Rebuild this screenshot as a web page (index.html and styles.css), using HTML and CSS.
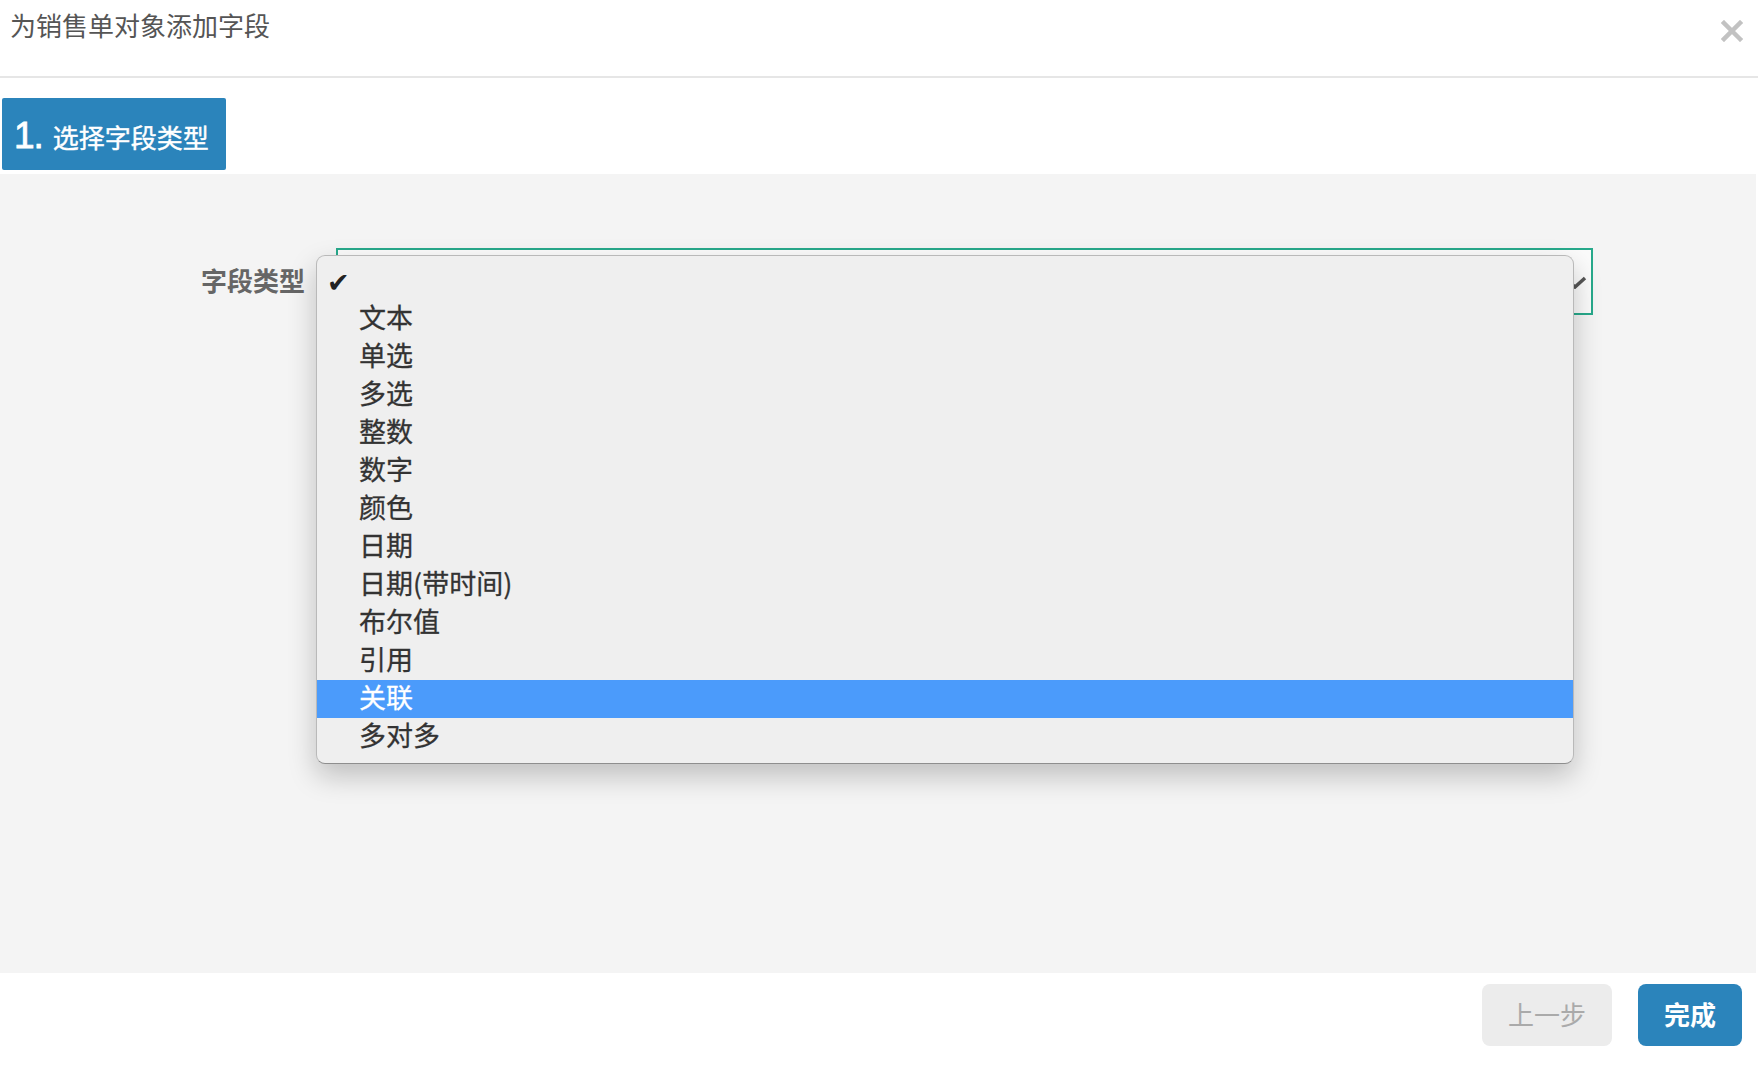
FILE: index.html
```html
<!DOCTYPE html>
<html lang="zh-CN">
<head>
    <meta charset="utf-8">
    <title>为销售单对象添加字段</title>
    <link rel="stylesheet" href="styles.css">
</head>
<body>
    <div class="dialog">

        <div class="dialogHead">
            <div class="title">为销售单对象添加字段</div>
            <span class="close">
                <svg width="22" height="22" viewBox="0 0 22 22">
                    <path d="M3 3 L19 19 M19 3 L3 19" stroke="#c2c2c2" stroke-width="4.5" stroke-linecap="square"/>
                </svg>
            </span>
        </div>

        <div class="steps">
            <div class="step"><span class="num">1.</span>选择字段类型</div>
        </div>

        <div class="panel">
            <div class="formRow">
                <label class="label">字段类型</label>
                <div class="select">
                    <svg class="arrow" width="24" height="14" viewBox="0 0 24 14">
                        <path d="M2 3 L12 12 L22 3" fill="none" stroke="#555" stroke-width="3.5"/>
                    </svg>
                </div>
            </div>

            <!-- native select opened -->
            <div class="menu">
                <div class="option checked">✔</div>
                <div class="option">文本</div>
                <div class="option">单选</div>
                <div class="option">多选</div>
                <div class="option">整数</div>
                <div class="option">数字</div>
                <div class="option">颜色</div>
                <div class="option">日期</div>
                <div class="option">日期(带时间)</div>
                <div class="option">布尔值</div>
                <div class="option">引用</div>
                <div class="option active">关联</div>
                <div class="option">多对多</div>
            </div>
        </div>

        <div class="dialogFoot">
            <button class="btn prev">上一步</button>
            <button class="btn done">完成</button>
        </div>

    </div>
</body>
</html>
```

FILE: styles.css
```css
* {
    margin: 0;
    padding: 0;
    box-sizing: border-box;
}

body {
    font-family: 'Noto Sans CJK SC', 'Noto Sans', sans-serif;
    background: #fff;
    width: 1758px;
    height: 1072px;
    overflow: hidden;
}

.dialogHead {
    height: 78px;
    border-bottom: 2px solid #e6e6e6;
    display: flex;
    justify-content: space-between;
    padding: 11px 15px 0 10px;
}

.title {
    font-size: 26px;
    line-height: 28px;
    color: #555;
}

.close {
    padding-top: 9px;
}

.steps {
    padding: 20px 0 0 2px;
}

.step {
    width: 224px;
    height: 72px;
    background: #2b84bb;
    border-radius: 2px;
    color: #fff;
    font-size: 26px;
    line-height: 72px;
    padding: 2px 0 0 12px;
    display: flex;
    align-items: baseline;
    -webkit-text-stroke: 0.4px #fff;
}

.num {
    font-family: 'Liberation Sans', sans-serif;
    font-size: 37px;
    margin-right: 10px;
    letter-spacing: -1px;
    -webkit-text-stroke: 0.8px #fff;
}

.panel {
    position: relative;
    margin-top: 4px;
    width: 1756px;
    height: 799px;
    background: #f4f4f4;
    padding-top: 74px;
}

.formRow {
    display: flex;
    align-items: center;
}

.label {
    width: 305px;
    text-align: right;
    font-size: 26px;
    font-weight: bold;
    color: #666;
    margin-right: 31px;
    padding-bottom: 5px;
}

.select {
    width: 1257px;
    height: 67px;
    border: 2px solid #27a98b;
    background: #fbfbfb;
    position: relative;
}

.arrow {
    position: absolute;
    right: 4px;
    top: 25px;
}

.menu {
    position: absolute;
    left: 316px;
    top: 81px;
    width: 1258px;
    height: 509px;
    background: #efefef;
    border: 1px solid #b9b9b9;
    border-bottom-color: #8e8e8e;
    border-radius: 9px;
    box-shadow: 0 12px 28px rgba(0, 0, 0, 0.22);
    padding: 6px 0;
}

.option {
    height: 38px;
    line-height: 34px;
    font-size: 27px;
    color: #333;
    padding-left: 42px;
    white-space: nowrap;
    -webkit-text-stroke: 0.3px #333;
}

.option.checked {
    padding-left: 10px;
    font-family: 'DejaVu Sans', sans-serif;
    font-size: 27px;
    color: #222;
    line-height: 42px;
    -webkit-text-stroke: 0;
}

.option.active {
    background: #4b9bfb;
    color: #fff;
    -webkit-text-stroke: 0.3px #fff;
}

.dialogFoot {
    display: flex;
    justify-content: flex-end;
    gap: 26px;
    padding: 11px 16px 0 0;
}

.btn {
    height: 62px;
    border: none;
    border-radius: 8px;
    font-family: 'Noto Sans CJK SC', sans-serif;
    font-size: 26px;
    padding-bottom: 4px;
}

.prev {
    width: 130px;
    background: #ececec;
    color: #aaa;
}

.done {
    width: 104px;
    background: #2b84bb;
    color: #fff;
    font-weight: bold;
}
```
